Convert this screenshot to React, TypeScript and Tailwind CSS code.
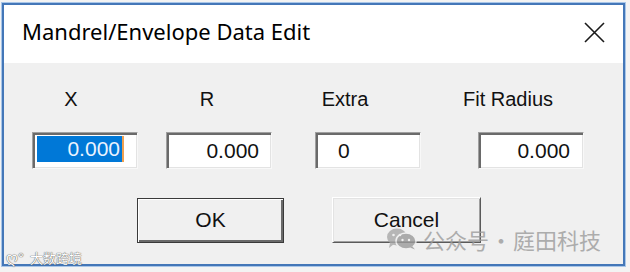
import React from "react";

const sans = { fontFamily: '"Liberation Sans", Arial, sans-serif' };

function Field({
  value,
  align,
  pad,
  ml,
}: {
  value: string;
  align: "left" | "right";
  pad: string;
  ml: string;
}) {
  return (
    <div
      className={`h-[37px] w-[106px] border border-t-[#a0a0a0] border-l-[#a0a0a0] border-b-[#f8f8f8] border-r-[#f8f8f8] bg-white shadow-[inset_2px_2px_0_#6a6a6a,inset_-1px_-1px_0_#e3e3e3] ${ml}`}
    >
      <div
        className={`flex h-full items-center text-[21px] leading-[26px] text-[#111] ${
          align === "right" ? "justify-end" : "justify-start"
        } ${pad}`}
      >
        {value}
      </div>
    </div>
  );
}

export default function App() {
  return (
    <div className="relative h-[272px] w-[630px] overflow-hidden bg-[#f3f3f3]" style={sans}>
      <div className="ml-[2px] mt-[3px] flex h-[263px] w-[623px] flex-col border-2 border-[#4477b8] shadow-[0_0_0_1px_#a9c6e8]">
        {/* Title bar */}
        <div className="flex h-[58px] items-start justify-between bg-white pl-[18px] pr-[18px] pt-[12px]">
          <span
            className="text-[22px] leading-[28px] text-black"
            style={{ fontFamily: '"Noto Sans", "Open Sans", sans-serif' }}
          >
            Mandrel/Envelope Data Edit
          </span>
          <svg className="mt-[5px]" width="21" height="21" viewBox="0 0 21 21">
            <path d="M1 1 L20 20 M20 1 L1 20" stroke="#1a1a1a" strokeWidth="1.6" fill="none" />
          </svg>
        </div>

        {/* Body */}
        <div className="flex flex-1 flex-col bg-[#f0f0f0] pt-[24px]">
          <div className="flex h-[24px] text-[20px] leading-[24px] text-[#111]">
            <span className="ml-[17px] w-[100px] text-center">X</span>
            <span className="ml-[36px] w-[100px] text-center">R</span>
            <span className="ml-[38px] w-[100px] text-center">Extra</span>
            <span className="ml-[63px] w-[100px] text-center">Fit Radius</span>
          </div>

          <div className="mt-[21px] flex">
            <div className="ml-[28px] h-[37px] w-[106px] border border-t-[#a0a0a0] border-l-[#a0a0a0] border-b-[#f8f8f8] border-r-[#f8f8f8] bg-white shadow-[inset_2px_2px_0_#6a6a6a,inset_-1px_-1px_0_#e3e3e3]">
              <div className="ml-[4px] mt-[3px] flex h-[26px]">
                <div className="flex w-[85px] items-center justify-end bg-[#0078d7] pr-[2px] text-[21px] leading-[26px] text-[#eaf3ff]">
                  0.000
                </div>
                <div className="w-[2px] bg-[#f0a050]" />
              </div>
            </div>
            <Field value="0.000" align="right" pad="pr-[12px]" ml="ml-[28px]" />
            <Field value="0" align="left" pad="pl-[22px]" ml="ml-[43px]" />
            <Field value="0.000" align="right" pad="pr-[13px]" ml="ml-[57px]" />
          </div>

          <div className="mt-[29px] flex">
            <button className="ml-[133px] flex h-[45px] w-[147px] items-start justify-center border border-[#3a3a3a] bg-[#f0f0f0] pt-[9px] text-[21px] leading-[24px] text-[#111] shadow-[inset_1px_1px_0_#ffffff,inset_-2px_-2px_0_#6a6a6a]">
              OK
            </button>
            <button className="ml-[48px] -mt-[1px] flex h-[46px] w-[149px] items-start justify-center border border-t-white border-l-white border-r-[#5a5a5a] border-b-[#5a5a5a] bg-[#f0f0f0] pt-[10px] text-[21px] leading-[24px] text-[#111] shadow-[inset_1px_1px_0_#e3e3e3,inset_-1px_-1px_0_#a0a0a0]">
              Cancel
            </button>
          </div>
        </div>
      </div>

      {/* WeChat watermark */}
      <div className="absolute left-[386px] top-[226px] flex items-center gap-[5px] opacity-80">
        <svg width="32" height="22" viewBox="0 0 32 22">
          <ellipse cx="11" cy="9" rx="10" ry="8.5" fill="#a8a8a8" />
          <path d="M4 15 L3 20 L8 16 Z" fill="#a8a8a8" />
          <ellipse cx="20" cy="13" rx="10" ry="8" fill="#9a9a9a" stroke="#f0f0f0" strokeWidth="1.5" />
          <path d="M26 18 L29 21.5 L24 19.5 Z" fill="#9a9a9a" />
          <circle cx="7.5" cy="7" r="1.3" fill="#f0f0f0" />
          <circle cx="14" cy="7" r="1.3" fill="#f0f0f0" />
          <circle cx="16.5" cy="12" r="1.2" fill="#f0f0f0" />
          <circle cx="23" cy="12" r="1.2" fill="#f0f0f0" />
        </svg>
        <div
          className="flex text-[22px] leading-[26px] text-[#9c9c9c]"
          style={{ fontFamily: '"Noto Sans CJK SC", "Noto Sans", sans-serif' }}
        >
          <span>公众号</span>
          <span className="w-[24px] text-center">·</span>
          <span>庭田科技</span>
        </div>
      </div>

      {/* bottom-left watermark */}
      <div className="absolute left-[6px] top-[250px] flex items-center gap-[6px]">
        <span className="text-[15px] leading-[16px] text-white [text-shadow:0_0_1px_#555,0_0_1px_#555]">
          ღ°
        </span>
        <span
          className="text-[13px] leading-[16px] text-white [text-shadow:0_0_1px_#555,0_0_1px_#555]"
          style={{ fontFamily: '"Noto Sans CJK SC", sans-serif' }}
        >
          大数跨境
        </span>
      </div>
    </div>
  );
}
